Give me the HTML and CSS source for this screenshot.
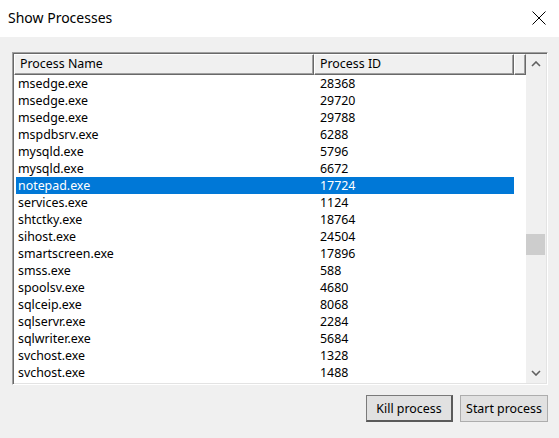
FILE: index.html
```html
<!DOCTYPE html>
<html>
<head>
<meta charset="utf-8">
<link rel="stylesheet" href="styles.css">
</head>
<body>
<div class="window">
  <div class="titlebar">
    <span class="title">Show Processes</span>
    <svg class="close" width="14" height="14" viewBox="0 0 14 14"><path d="M0.5 0.5 L13.5 13.5 M13.5 0.5 L0.5 13.5" stroke="#000" stroke-width="1"/></svg>
  </div>
  <div class="body">
    <div class="listbox">
      <div class="listmain">
        <div class="header">
          <div class="hcell c1">Process Name</div>
          <div class="hcell c2">Process ID</div>
          <div class="hcell c3"></div>
        </div>
        <div class="rows">
          <div class="row"><span class="name">msedge.exe</span><span class="pid">28368</span></div>
          <div class="row"><span class="name">msedge.exe</span><span class="pid">29720</span></div>
          <div class="row"><span class="name">msedge.exe</span><span class="pid">29788</span></div>
          <div class="row"><span class="name">mspdbsrv.exe</span><span class="pid">6288</span></div>
          <div class="row"><span class="name">mysqld.exe</span><span class="pid">5796</span></div>
          <div class="row"><span class="name">mysqld.exe</span><span class="pid">6672</span></div>
          <div class="row selected"><span class="name">notepad.exe</span><span class="pid">17724</span></div>
          <div class="row"><span class="name">services.exe</span><span class="pid">1124</span></div>
          <div class="row"><span class="name">shtctky.exe</span><span class="pid">18764</span></div>
          <div class="row"><span class="name">sihost.exe</span><span class="pid">24504</span></div>
          <div class="row"><span class="name">smartscreen.exe</span><span class="pid">17896</span></div>
          <div class="row"><span class="name">smss.exe</span><span class="pid">588</span></div>
          <div class="row"><span class="name">spoolsv.exe</span><span class="pid">4680</span></div>
          <div class="row"><span class="name">sqlceip.exe</span><span class="pid">8068</span></div>
          <div class="row"><span class="name">sqlservr.exe</span><span class="pid">2284</span></div>
          <div class="row"><span class="name">sqlwriter.exe</span><span class="pid">5684</span></div>
          <div class="row"><span class="name">svchost.exe</span><span class="pid">1328</span></div>
          <div class="row"><span class="name">svchost.exe</span><span class="pid">1488</span></div>
        </div>
      </div>
      <div class="scrollbar">
        <div class="arrow">
          <svg width="10" height="6" viewBox="0 0 10 6"><path d="M1 5 L5 1 L9 5" fill="none" stroke="#606060" stroke-width="1.6"/></svg>
        </div>
        <div class="track">
          <div class="thumb"></div>
        </div>
        <div class="arrow">
          <svg width="10" height="6" viewBox="0 0 10 6"><path d="M1 1 L5 5 L9 1" fill="none" stroke="#606060" stroke-width="1.6"/></svg>
        </div>
      </div>
    </div>
    <div class="buttons">
      <button class="btn default">Kill process</button>
      <button class="btn">Start process</button>
    </div>
  </div>
</div>
</body>
</html>
```

FILE: styles.css
```css
html, body {
  margin: 0;
  padding: 0;
}
body {
  width: 559px;
  height: 438px;
  background: #f0f0f0;
  font-family: "Noto Sans", "Open Sans", sans-serif;
  color: #000;
  overflow: hidden;
}
.window {
  display: flex;
  flex-direction: column;
  height: 438px;
}
.titlebar {
  height: 37px;
  background: #fff;
  display: flex;
  align-items: center;
  justify-content: space-between;
  padding: 0 13px 0 8px;
  box-sizing: border-box;
}
.title {
  font-size: 14px;
  line-height: 20px;
  margin-top: -1px;
}
.close {
  display: block;
  margin-top: -1px;
}
.body {
  padding: 15px 11px 0 12px;
  display: flex;
  flex-direction: column;
}
.listbox {
  height: 333px;
  box-sizing: border-box;
  border-top: 1px solid #a0a0a0;
  border-left: 1px solid #a0a0a0;
  border-right: 1px solid #fff;
  border-bottom: 1px solid #fff;
  box-shadow: inset 1px 1px 0 #696969, inset -1px -1px 0 #e3e3e3;
  padding: 1px;
  display: flex;
  background: #fff;
}
.listmain {
  flex: 1;
  display: flex;
  flex-direction: column;
  background: #fff;
}
.header {
  display: flex;
  height: 21px;
}
.hcell {
  box-sizing: border-box;
  background: #f0f0f0;
  border-top: 1px solid #fff;
  border-left: 1px solid #fff;
  border-right: 1px solid #696969;
  border-bottom: 1px solid #696969;
  box-shadow: inset -1px -1px 0 #a0a0a0;
  font-size: 12.4px;
  line-height: 18px;
  padding-left: 5px;
  white-space: nowrap;
}
.c1 { width: 300px; }
.c2 { width: 200px; }
.c3 { width: 12px; }
.rows {
  display: flex;
  flex-direction: column;
}
.row {
  height: 17px;
  box-sizing: border-box;
  display: flex;
  font-size: 12.4px;
  line-height: 16px;
  padding-top: 1px;
  width: 498px;
  margin-left: 2px;
  white-space: nowrap;
}
.row .name {
  width: 298px;
  padding-left: 2px;
  box-sizing: border-box;
}
.row .pid {
  padding-left: 6px;
}
.row.selected {
  background: #0078d7;
  color: #fff;
}
.scrollbar {
  width: 20px;
  background: #f0f0f0;
  display: flex;
  flex-direction: column;
}
.arrow {
  height: 20px;
  display: flex;
  align-items: center;
  justify-content: center;
}
.track {
  flex: 1;
  position: relative;
}
.thumb {
  position: absolute;
  left: 0;
  right: 1px;
  top: 160px;
  height: 21px;
  background: #cdcdcd;
}
.buttons {
  display: flex;
  justify-content: flex-end;
  gap: 7px;
  margin-top: 10px;
}
.btn {
  font-family: "Noto Sans", "Open Sans", sans-serif;
  font-size: 12.4px;
  height: 27px;
  padding: 0;
  background: #e1e1e1;
  border: 1px solid #adadad;
  color: #000;
  box-sizing: border-box;
}
.btn.default {
  width: 87px;
  border-width: 1px 2px 2px 1px;
  border-style: solid;
  border-color: #7a7a7a #5a5a5a #5a5a5a #7a7a7a;
}
.btn:not(.default) {
  width: 88px;
}
```
